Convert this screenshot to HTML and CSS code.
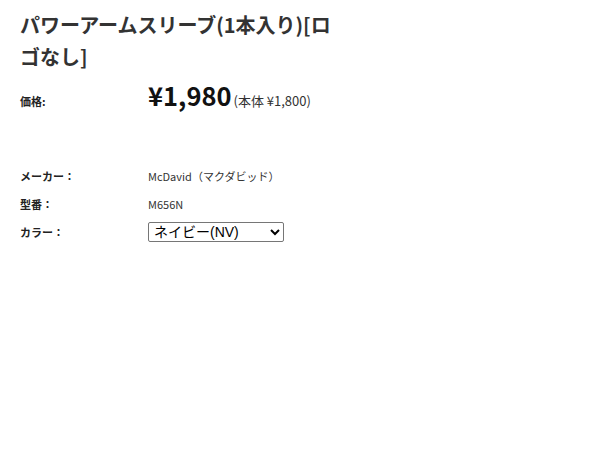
FILE: index.html
```html
<!DOCTYPE html>
<html lang="ja">
<head>
<meta charset="utf-8">
<link rel="stylesheet" href="styles.css">
</head>
<body>
<div class="product">
  <h1 class="title">パワーアームスリーブ(1本入り)[ロゴなし]</h1>
  <div class="price-row">
    <div class="label label-price">価格:</div>
    <div class="price"><span class="price-main">¥1,980</span><span class="price-sub">(本体 ¥1,800)</span></div>
  </div>
  <div class="specs">
    <div class="spec">
      <div class="label">メーカー：</div>
      <div class="value">McDavid（マクダビッド）</div>
    </div>
    <div class="spec">
      <div class="label">型番：</div>
      <div class="value">M656N</div>
    </div>
    <div class="spec">
      <div class="label">カラー：</div>
      <div class="value">
        <select class="color-select">
          <option>ネイビー(NV)</option>
        </select>
      </div>
    </div>
  </div>
</div>
</body>
</html>
```
FILE: styles.css
```css
html, body {
  margin: 0;
  padding: 0;
  background: #fff;
}
body {
  font-family: "Noto Sans CJK JP", "Noto Sans", sans-serif;
  color: #333;
}
.product {
  padding: 9px 20px;
}
.title {
  width: 320px;
  margin: 0;
  font-size: 20px;
  font-weight: bold;
  line-height: 32px;
  color: #333;
}
.price-row {
  display: flex;
  align-items: center;
  margin-top: 3px;
  height: 36px;
}
.price {
  display: flex;
  align-items: baseline;
}
.label {
  width: 128px;
  font-size: 11px;
  font-weight: bold;
  color: #222;
}
.label-price {
  padding-top: 14px;
}
.price-main {
  font-size: 25.5px;
  font-weight: bold;
  color: #111;
}
.price-sub {
  font-size: 13px;
  margin-left: 2px;
  color: #333;
}
.specs {
  margin-top: 50px;
  display: flex;
  flex-direction: column;
}
.spec {
  display: flex;
  align-items: center;
  height: 28px;
}
.value {
  font-size: 11px;
  color: #333;
}
.color-select {
  width: 136px;
  height: 20px;
  font-family: "Liberation Sans", "Noto Sans CJK JP", sans-serif;
  font-size: 14px;
  color: #000;
  border: 1px solid #767676;
  border-radius: 2px;
  background: #fff;
  padding: 0 1px;
}
```
